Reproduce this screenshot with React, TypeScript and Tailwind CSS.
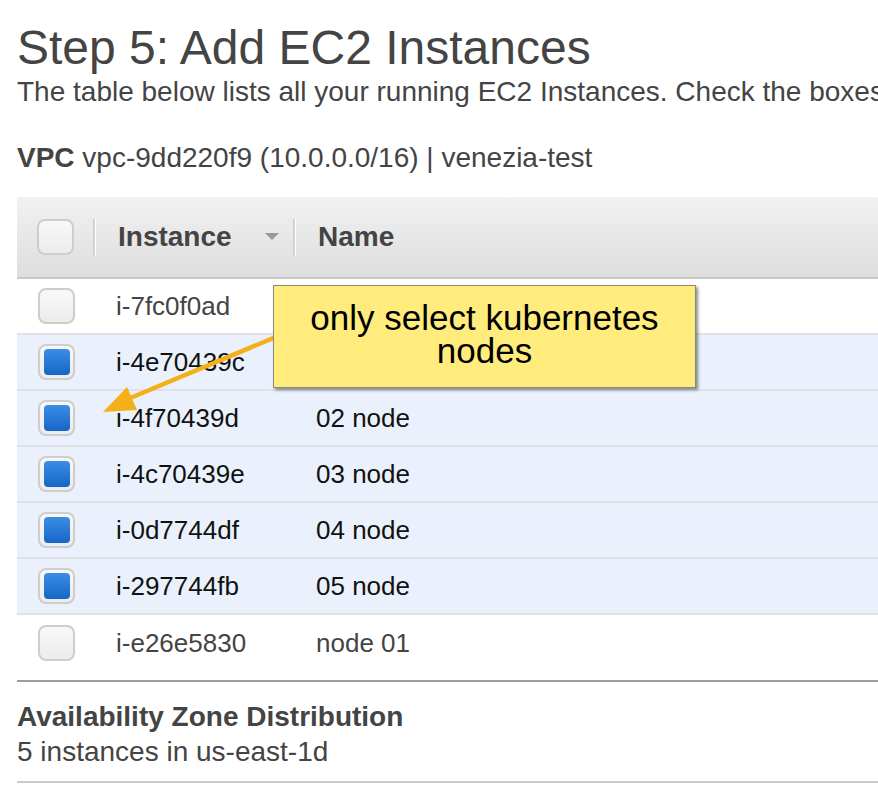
import React from "react";

type Row = { id: string; name: string; selected: boolean };

const rows: Row[] = [
  { id: "i-7fc0f0ad", name: "", selected: false },
  { id: "i-4e70439c", name: "", selected: true },
  { id: "i-4f70439d", name: "02 node", selected: true },
  { id: "i-4c70439e", name: "03 node", selected: true },
  { id: "i-0d7744df", name: "04 node", selected: true },
  { id: "i-297744fb", name: "05 node", selected: true },
  { id: "i-e26e5830", name: "node 01", selected: false },
];

function Checkbox({ checked }: { checked?: boolean }) {
  return (
    <div className="w-[37px] h-[36px] rounded-[8px] border-2 border-[#cdcdcd] bg-gradient-to-b from-[#f8f8f8] to-[#ececec] flex items-center justify-center">
      {checked && (
        <div className="w-[26px] h-[26px] rounded-[4px] bg-gradient-to-b from-[#3b8de4] to-[#1565c8]" />
      )}
    </div>
  );
}

function Divider() {
  return <div className="w-[3px] h-[37px] border-l-2 border-[#d2d2d2] bg-white" />;
}

export default function App() {
  return (
    <div
      className="relative w-[878px] h-[790px] overflow-hidden bg-white pl-[17px] text-[#444]"
      style={{ fontFamily: '"Liberation Sans", Arial, sans-serif' }}
    >
      <h1 className="pt-[24px] text-[48px] leading-[48px] whitespace-nowrap">
        Step 5: Add EC2 Instances
      </h1>
      <p className="mt-[6px] text-[28px] leading-[28px] whitespace-nowrap">
        The table below lists all your running EC2 Instances. Check the boxes
      </p>
      <p className="mt-[38px] text-[28px] leading-[28px] whitespace-nowrap">
        <span className="font-bold">VPC</span> vpc-9dd220f9 (10.0.0.0/16) | venezia-test
      </p>

      <div className="mt-[25px]">
        <div className="h-[82px] flex items-center bg-gradient-to-b from-[#f1f1f1] to-[#dedede] border-b-2 border-[#c9c9c9]">
          <div className="w-[79px] flex items-center">
            <div className="ml-[20px]">
              <Checkbox />
            </div>
            <div className="ml-auto">
              <Divider />
            </div>
          </div>
          <div className="w-[200px] flex items-center">
            <span className="ml-[22px] text-[28px] font-bold">Instance</span>
            <svg className="ml-auto mr-[14px]" width="14" height="8" viewBox="0 0 14 8">
              <path d="M0 0 L14 0 L7 7 Z" fill="#9a9a9a" />
            </svg>
            <Divider />
          </div>
          <span className="ml-[22px] text-[28px] font-bold">Name</span>
        </div>

        {rows.map((r, i) => (
          <div
            key={r.id}
            className={`h-[56px] flex items-center ${
              r.selected ? "bg-[#eaf1fc] text-[#111]" : "bg-white text-[#444]"
            } ${i < rows.length - 1 ? "border-b-2 border-[#dfe3e8]" : ""}`}
          >
            <div className="w-[79px] pl-[21px]">
              <Checkbox checked={r.selected} />
            </div>
            <div className="w-[200px] pl-[20px] text-[26px]">{r.id}</div>
            <div className="pl-[20px] text-[26px]">{r.name}</div>
          </div>
        ))}
      </div>

      <div className="mt-[9px] border-t-2 border-[#9c9c9c]" />
      <div className="mt-[21px] text-[28px] leading-[28px] font-bold whitespace-nowrap">
        Availability Zone Distribution
      </div>
      <div className="mt-[7px] text-[28px] leading-[28px] whitespace-nowrap">5 instances in us-east-1d</div>
      <div className="mt-[15px] border-t-2 border-[#cbcbcb]" />

      {/* callout arrow */}
      <svg className="absolute left-0 top-0 pointer-events-none" width="878" height="790">
        <line x1="290" y1="331" x2="128" y2="399" stroke="#f4b018" strokeWidth="4.5" />
        <path d="M103 412 L137 410 L127 387 Z" fill="#f4b018" />
      </svg>

      {/* callout */}
      <div className="absolute left-[273px] top-[285px] w-[423px] h-[103px] bg-[#ffec7c] border border-[#8a8a7a] shadow-[2px_2px_3px_rgba(0,0,0,0.45)] flex items-center justify-center pb-[6px]">
        <p className="text-center text-[35px] leading-[33px] text-black">
          only select kubernetes
          <br />
          nodes
        </p>
      </div>
    </div>
  );
}
